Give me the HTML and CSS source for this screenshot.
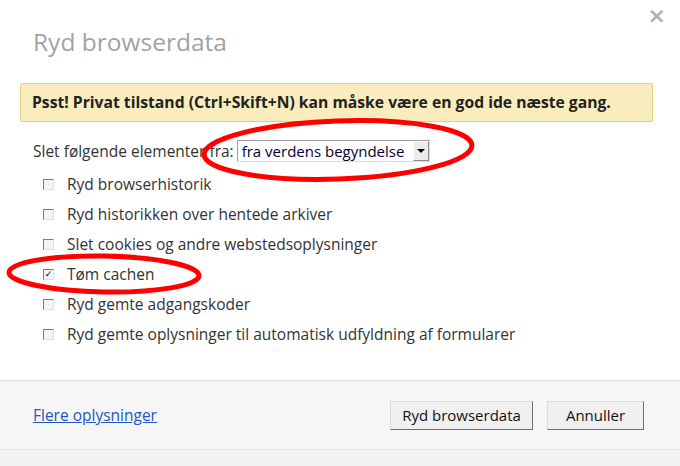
FILE: index.html
```html
<!DOCTYPE html>
<html lang="da">
  <head>
    <meta charset="UTF-8" />
    <meta name="viewport" content="width=device-width, initial-scale=1.0" />
    <title>Ryd browserdata</title>
    <link rel="stylesheet" href="styles.css">
  </head>
  <body>
    <div class="dialog">
      <div class="header">
        <h1>Ryd browserdata</h1>
        <span class="close">&times;</span>
      </div>

      <div class="notice">Psst! Privat tilstand (Ctrl+Skift+N) kan måske være en god ide næste gang.</div>

      <div class="period">
        <span>Slet følgende elementer fra:</span>
        <div class="select">
          <span class="select-value">fra verdens begyndelse</span>
          <span class="select-arrow"></span>
        </div>
      </div>

      <ul class="items">
        <li><span class="check"></span>Ryd browserhistorik</li>
        <li><span class="check"></span>Ryd historikken over hentede arkiver</li>
        <li><span class="check"></span>Slet cookies og andre webstedsoplysninger</li>
        <li><span class="check checked">&#10003;</span>Tøm cachen</li>
        <li><span class="check"></span>Ryd gemte adgangskoder</li>
        <li><span class="check"></span>Ryd gemte oplysninger til automatisk udfyldning af formularer</li>
      </ul>

      <div class="footer">
        <a href="#">Flere oplysninger</a>
        <div class="buttons">
          <button class="btn-wide">Ryd browserdata</button>
          <button class="btn-narrow">Annuller</button>
        </div>
      </div>
      <div class="bottom"></div>
    </div>

    <!-- red marker circles drawn on top of the screenshot -->
    <svg class="marks" width="680" height="466" viewBox="0 0 680 466">
      <ellipse cx="338" cy="150" rx="134" ry="29" transform="rotate(-2 338 150)" />
      <ellipse cx="104" cy="274" rx="95" ry="18" transform="rotate(1 104 274)" />
    </svg>
  </body>
</html>
```

FILE: styles.css
```css
body {
  margin: 0;
  padding: 0;
  background-color: #fff;
  font-family: "Open Sans", "Noto Sans", sans-serif;
  font-size: 15.5px;
  color: #333;
}

.dialog {
  display: flex;
  flex-direction: column;
  height: 466px;
}

.header {
  display: flex;
  justify-content: space-between;
  align-items: flex-start;
  padding: 0 14px 0 33px;
}

h1 {
  margin: 24px 0 0;
  font-size: 24.5px;
  font-weight: normal;
  color: #a2a2a2;
  line-height: 36px;
}

.close {
  margin-top: 3px;
  font-size: 22px;
  font-weight: bold;
  color: #b0b0b0;
  font-family: "DejaVu Sans", sans-serif;
}

.notice {
  margin: 23px 27px 0 20px;
  height: 37px;
  padding: 0 11px;
  background-color: #f9edbe;
  border: 1px solid #e6cd7e;
  border-radius: 2px;
  font-weight: bold;
  font-size: 15.7px;
  line-height: 37px;
  color: #222;
  white-space: nowrap;
}

.period {
  display: flex;
  align-items: center;
  gap: 3px;
  margin: 18px 0 0 33px;
  height: 22px;
}

.select {
  display: flex;
  width: 191px;
  height: 20px;
  border: 1px solid #a0a0a0;
  border-right-color: #dcdcdc;
  border-bottom-color: #dcdcdc;
  background-color: #fff;
}

.select-value {
  flex: 1;
  padding-left: 4px;
  font-size: 15px;
  line-height: 20px;
  color: #000033;
  white-space: nowrap;
  overflow: hidden;
}

.select-arrow {
  position: relative;
  width: 16px;
  background-color: #ececec;
  border: 1px solid #fafafa;
  border-right-color: #8a8a8a;
  border-bottom-color: #8a8a8a;
  box-sizing: border-box;
}

.select-arrow::after {
  content: "";
  position: absolute;
  left: 3px;
  top: 7px;
  border-left: 4px solid transparent;
  border-right: 4px solid transparent;
  border-top: 4px solid #000;
}

.items {
  list-style: none;
  margin: 7px 0 0;
  padding: 0 0 0 43px;
}

.items li {
  display: flex;
  align-items: center;
  height: 30px;
}

.check {
  width: 9px;
  height: 9px;
  margin-right: 13px;
  border: 1px solid #7a7a7a;
  border-right-color: #e0e0e0;
  border-bottom-color: #e0e0e0;
  background-color: #f4f4f4;
  font-size: 9px;
  line-height: 9px;
  text-align: center;
  font-weight: bold;
  color: #000;
  font-family: "DejaVu Sans", sans-serif;
}

.footer {
  display: flex;
  justify-content: space-between;
  align-items: center;
  margin-top: 31px;
  height: 68px;
  padding: 0 36px 0 33px;
  background-color: #f6f6f6;
  border-top: 1px solid #e0e0e0;
  border-bottom: 1px solid #e6e6e6;
}

.footer a {
  color: #2255c8;
  font-size: 15.5px;
}

.buttons {
  display: flex;
  gap: 14px;
}

button {
  height: 29px;
  font-family: "Open Sans", "Noto Sans", sans-serif;
  font-size: 15px;
  color: #111;
  background-color: #f0f0f0;
  border: 1px solid #dadada;
  border-right-color: #6e6e6e;
  border-bottom-color: #6e6e6e;
  padding: 0;
}

.btn-wide {
  width: 143px;
}

.btn-narrow {
  width: 97px;
}

.bottom {
  flex: 1;
  background-color: #f2f2f2;
}

.marks {
  position: absolute;
  left: 0;
  top: 0;
  pointer-events: none;
}

.marks ellipse {
  fill: none;
  stroke: #ff0000;
  stroke-width: 5;
}
```
